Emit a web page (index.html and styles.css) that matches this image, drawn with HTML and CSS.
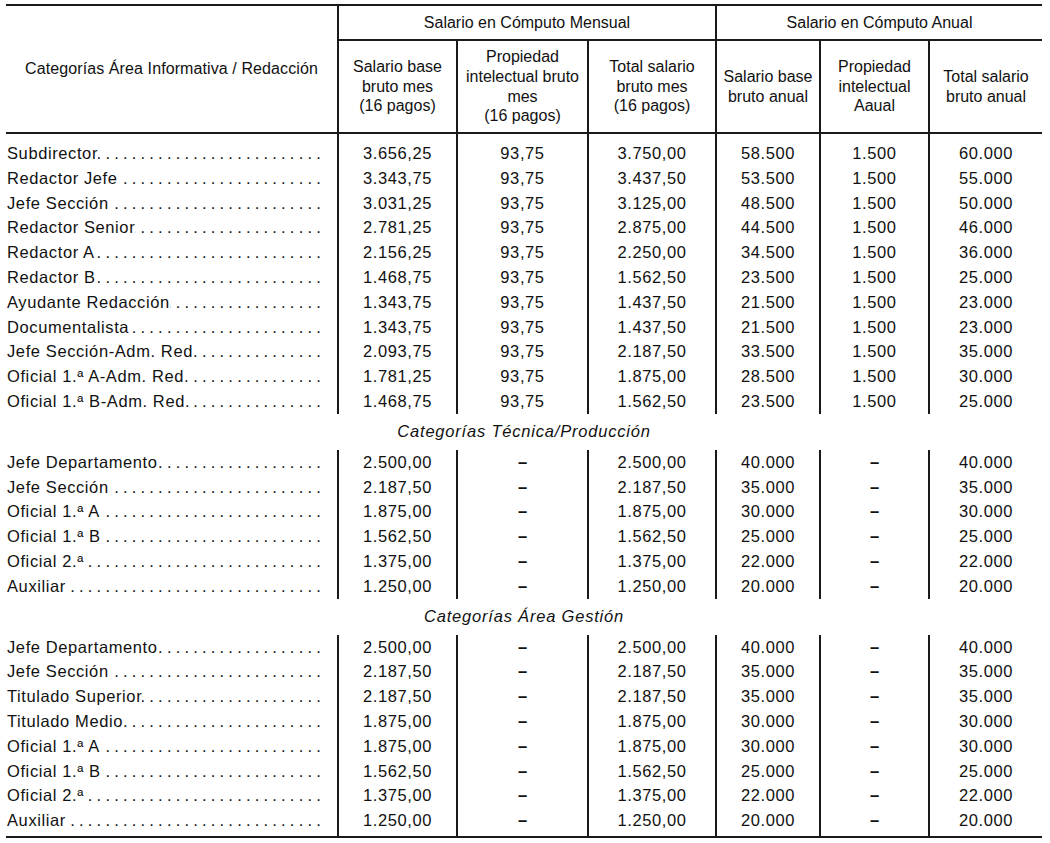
FILE: index.html
```html
<!DOCTYPE html>
<html lang="es">
<head>
  <meta charset="UTF-8">
  <meta name="viewport" content="width=device-width, initial-scale=1.0">
  <title>Tabla salarial</title>
  <link rel="stylesheet" href="styles.css">
</head>
<body>

  <table class="salary-table">
    <colgroup>
      <col class="col-name">
      <col class="col-a">
      <col class="col-b">
      <col class="col-c">
      <col class="col-d">
      <col class="col-e">
      <col class="col-f">
    </colgroup>
    <thead>
      <tr class="head-top">
        <th rowspan="2" class="head-name">Categorías Área Informativa / Redacción</th>
        <th colspan="3">Salario en Cómputo Mensual</th>
        <th colspan="3">Salario en Cómputo Anual</th>
      </tr>
      <tr class="head-sub">
        <th>Salario base<br>bruto mes<br>(16 pagos)</th>
        <th>Propiedad<br>intelectual bruto<br>mes<br>(16 pagos)</th>
        <th>Total salario<br>bruto mes<br>(16 pagos)</th>
        <th>Salario base<br>bruto anual</th>
        <th>Propiedad<br>intelectual<br>Aaual</th>
        <th>Total salario<br>bruto anual</th>
      </tr>
    </thead>

    <tbody class="block">
      <tr class="spacer top"><td></td><td></td><td></td><td></td><td></td><td></td><td></td></tr>
      <tr><td><div class="name"><span>Subdirector</span><span class="dots"></span></div></td><td>3.656,25</td><td>93,75</td><td>3.750,00</td><td>58.500</td><td>1.500</td><td>60.000</td></tr>
      <tr><td><div class="name"><span>Redactor Jefe</span><span class="dots"></span></div></td><td>3.343,75</td><td>93,75</td><td>3.437,50</td><td>53.500</td><td>1.500</td><td>55.000</td></tr>
      <tr><td><div class="name"><span>Jefe Sección</span><span class="dots"></span></div></td><td>3.031,25</td><td>93,75</td><td>3.125,00</td><td>48.500</td><td>1.500</td><td>50.000</td></tr>
      <tr><td><div class="name"><span>Redactor Senior</span><span class="dots"></span></div></td><td>2.781,25</td><td>93,75</td><td>2.875,00</td><td>44.500</td><td>1.500</td><td>46.000</td></tr>
      <tr><td><div class="name"><span>Redactor A</span><span class="dots"></span></div></td><td>2.156,25</td><td>93,75</td><td>2.250,00</td><td>34.500</td><td>1.500</td><td>36.000</td></tr>
      <tr><td><div class="name"><span>Redactor B</span><span class="dots"></span></div></td><td>1.468,75</td><td>93,75</td><td>1.562,50</td><td>23.500</td><td>1.500</td><td>25.000</td></tr>
      <tr><td><div class="name"><span>Ayudante Redacción</span><span class="dots"></span></div></td><td>1.343,75</td><td>93,75</td><td>1.437,50</td><td>21.500</td><td>1.500</td><td>23.000</td></tr>
      <tr><td><div class="name"><span>Documentalista</span><span class="dots"></span></div></td><td>1.343,75</td><td>93,75</td><td>1.437,50</td><td>21.500</td><td>1.500</td><td>23.000</td></tr>
      <tr><td><div class="name"><span>Jefe Sección-Adm. Red.</span><span class="dots"></span></div></td><td>2.093,75</td><td>93,75</td><td>2.187,50</td><td>33.500</td><td>1.500</td><td>35.000</td></tr>
      <tr><td><div class="name"><span>Oficial 1.ª A-Adm. Red.</span><span class="dots"></span></div></td><td>1.781,25</td><td>93,75</td><td>1.875,00</td><td>28.500</td><td>1.500</td><td>30.000</td></tr>
      <tr><td><div class="name"><span>Oficial 1.ª B-Adm. Red.</span><span class="dots"></span></div></td><td>1.468,75</td><td>93,75</td><td>1.562,50</td><td>23.500</td><td>1.500</td><td>25.000</td></tr>
    </tbody>

    <tbody>
      <tr class="section"><td colspan="7">Categorías Técnica/Producción</td></tr>
    </tbody>

    <tbody class="block">
      <tr><td><div class="name"><span>Jefe Departamento</span><span class="dots"></span></div></td><td>2.500,00</td><td class="nil">–</td><td>2.500,00</td><td>40.000</td><td class="nil">–</td><td>40.000</td></tr>
      <tr><td><div class="name"><span>Jefe Sección</span><span class="dots"></span></div></td><td>2.187,50</td><td class="nil">–</td><td>2.187,50</td><td>35.000</td><td class="nil">–</td><td>35.000</td></tr>
      <tr><td><div class="name"><span>Oficial 1.ª A</span><span class="dots"></span></div></td><td>1.875,00</td><td class="nil">–</td><td>1.875,00</td><td>30.000</td><td class="nil">–</td><td>30.000</td></tr>
      <tr><td><div class="name"><span>Oficial 1.ª B</span><span class="dots"></span></div></td><td>1.562,50</td><td class="nil">–</td><td>1.562,50</td><td>25.000</td><td class="nil">–</td><td>25.000</td></tr>
      <tr><td><div class="name"><span>Oficial 2.ª</span><span class="dots"></span></div></td><td>1.375,00</td><td class="nil">–</td><td>1.375,00</td><td>22.000</td><td class="nil">–</td><td>22.000</td></tr>
      <tr><td><div class="name"><span>Auxiliar</span><span class="dots"></span></div></td><td>1.250,00</td><td class="nil">–</td><td>1.250,00</td><td>20.000</td><td class="nil">–</td><td>20.000</td></tr>
    </tbody>

    <tbody>
      <tr class="section"><td colspan="7">Categorías Área Gestión</td></tr>
    </tbody>

    <tbody class="block">
      <tr><td><div class="name"><span>Jefe Departamento</span><span class="dots"></span></div></td><td>2.500,00</td><td class="nil">–</td><td>2.500,00</td><td>40.000</td><td class="nil">–</td><td>40.000</td></tr>
      <tr><td><div class="name"><span>Jefe Sección</span><span class="dots"></span></div></td><td>2.187,50</td><td class="nil">–</td><td>2.187,50</td><td>35.000</td><td class="nil">–</td><td>35.000</td></tr>
      <tr><td><div class="name"><span>Titulado Superior</span><span class="dots"></span></div></td><td>2.187,50</td><td class="nil">–</td><td>2.187,50</td><td>35.000</td><td class="nil">–</td><td>35.000</td></tr>
      <tr><td><div class="name"><span>Titulado Medio</span><span class="dots"></span></div></td><td>1.875,00</td><td class="nil">–</td><td>1.875,00</td><td>30.000</td><td class="nil">–</td><td>30.000</td></tr>
      <tr><td><div class="name"><span>Oficial 1.ª A</span><span class="dots"></span></div></td><td>1.875,00</td><td class="nil">–</td><td>1.875,00</td><td>30.000</td><td class="nil">–</td><td>30.000</td></tr>
      <tr><td><div class="name"><span>Oficial 1.ª B</span><span class="dots"></span></div></td><td>1.562,50</td><td class="nil">–</td><td>1.562,50</td><td>25.000</td><td class="nil">–</td><td>25.000</td></tr>
      <tr><td><div class="name"><span>Oficial 2.ª</span><span class="dots"></span></div></td><td>1.375,00</td><td class="nil">–</td><td>1.375,00</td><td>22.000</td><td class="nil">–</td><td>22.000</td></tr>
      <tr><td><div class="name"><span>Auxiliar</span><span class="dots"></span></div></td><td>1.250,00</td><td class="nil">–</td><td>1.250,00</td><td>20.000</td><td class="nil">–</td><td>20.000</td></tr>
      <tr class="spacer bottom"><td></td><td></td><td></td><td></td><td></td><td></td><td></td></tr>
    </tbody>
  </table>

</body>
</html>
```

FILE: styles.css
```css
body {
  font-family: 'Liberation Sans', Arial, sans-serif;
  background-color: #fff;
  color: #111;
  margin: 0;
  padding: 4px 0 0 6px;
}

.salary-table {
  width: 1036px;
  border-collapse: collapse;
  table-layout: fixed;
  border-top: 2px solid #1a1a1a;
  border-bottom: 2px solid #1a1a1a;
}

.col-name { width: 332px; }
.col-a { width: 119px; }
.col-b { width: 131px; }
.col-c { width: 128px; }
.col-d { width: 104px; }
.col-e { width: 109px; }
.col-f { width: 113px; }

/* header */
.salary-table th {
  font-weight: normal;
  font-size: 16px;
  line-height: 19.6px;
  text-align: center;
  vertical-align: middle;
  padding: 0 2px;
  border-left: 2px solid #1a1a1a;
}

.salary-table th.head-name {
  border-left: none;
  letter-spacing: 0.1px;
}

.head-top th {
  height: 33px;
  border-bottom: 2px solid #1a1a1a;
}

.head-sub th {
  height: 91px;
  border-bottom: 2px solid #1a1a1a;
}

/* body rows */
.salary-table td {
  font-size: 16.5px;
  letter-spacing: 0.6px;
  line-height: 24.8px;
  height: 24.8px;
  padding: 0;
  text-align: center;
  white-space: nowrap;
}

.salary-table td.nil {
  font-weight: bold;
  letter-spacing: 0;
}

.block td + td {
  border-left: 2px solid #1a1a1a;
}

.block td:first-child {
  text-align: left;
  padding: 0 12px 0 1px;
}

.spacer.top td {
  height: 7px;
  line-height: 7px;
}

.spacer.bottom td {
  height: 3px;
  line-height: 3px;
}

.name {
  display: flex;
  overflow: hidden;
}

.name span {
  flex: none;
}

.name .dots {
  flex: 1;
  min-width: 0;
  overflow: hidden;
  direction: rtl;
  letter-spacing: 4.2px;
  padding-left: 5px;
}

.name .dots::before {
  content: "..................................................................";
}

.section td {
  height: 36px;
  font-style: italic;
  letter-spacing: 0.8px;
  text-align: center;
  vertical-align: middle;
}
```
